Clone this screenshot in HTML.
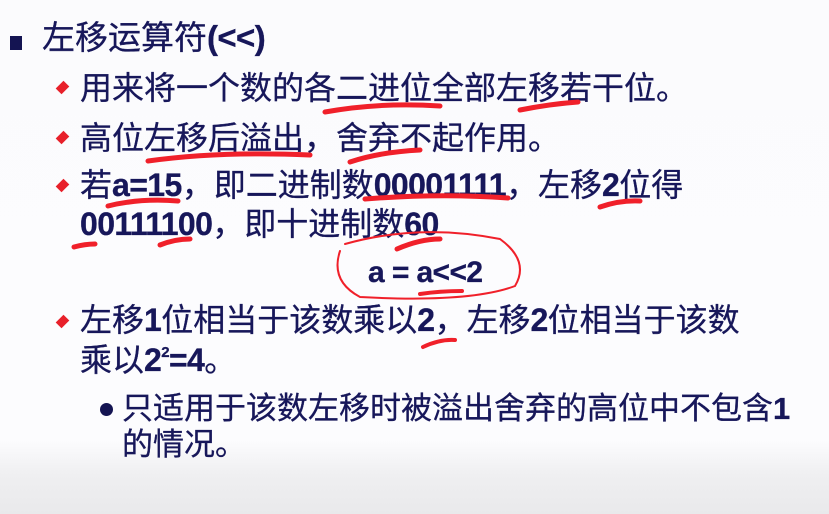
<!DOCTYPE html>
<html><head><meta charset="utf-8"><style>
html,body{margin:0;padding:0}
body{width:829px;height:514px;overflow:hidden;position:relative;background:linear-gradient(to bottom,#fbfbfd 0,#fcfcfe 440px,#efeff1 475px,#e9e9eb 514px);font-family:"Liberation Sans","Noto Sans CJK SC",sans-serif;color:#17175a}
.t{position:absolute;white-space:nowrap;line-height:1;-webkit-text-stroke:0.3px #17175a}
b{font-weight:bold;letter-spacing:-0.6px}
.d{position:absolute;width:11px;height:11px;background:#e8202a;transform:rotate(45deg) scaleX(0.75)}
</style></head><body>
<div style="position:absolute;left:10px;top:36px;width:12px;height:14px;background:#141452"></div>
<div class="t" style="left:42px;top:21px;font-size:33px">左移运算符<b>(&lt;&lt;)</b></div>

<div class="d" style="left:57px;top:82px"></div>
<div class="t" style="left:80px;top:72px;font-size:32px">用来将一个数的各二进位全部左移若干位。</div>
<div class="d" style="left:57px;top:132px"></div>
<div class="t" style="left:80px;top:122px;font-size:32px">高位左移后溢出，舍弃不起作用。</div>
<div class="d" style="left:57px;top:180px"></div>
<div class="t" style="left:80px;top:169px;font-size:32px">若<b>a=15</b>，即二进制数<b>00001111</b>，左移<b>2</b>位得</div>
<div class="t" style="left:80px;top:208px;font-size:32px"><b>00111100</b>，即十进制数<b>60</b></div>
<div class="t" style="left:368px;top:258px;font-size:30px"><b>a = a&lt;&lt;2</b></div>
<div class="d" style="left:57px;top:316px"></div>
<div class="t" style="left:80px;top:304px;font-size:32px">左移<b>1</b>位相当于该数乘以<b>2</b>，左移<b>2</b>位相当于该数</div>
<div class="t" style="left:80px;top:344px;font-size:32px">乘以<b>2<sup style="font-size:15px;vertical-align:14px">2</sup>=4</b>。</div>
<div style="position:absolute;left:100px;top:403px;width:13px;height:13px;border-radius:50%;background:#141452"></div>
<div class="t" style="left:122px;top:393px;font-size:31px">只适用于该数左移时被溢出舍弃的高位中不包含<b>1</b></div>
<div class="t" style="left:122px;top:429px;font-size:31px">的情况。</div>

<svg width="829" height="514" style="position:absolute;left:0;top:0" fill="none" stroke="#f0202a" stroke-linecap="round">
<path d="M325 112 Q380 102 440 106" stroke-width="5"/>
<path d="M520 110 Q550 104 578 102" stroke-width="5"/>
<path d="M148 161 Q220 151 310 155" stroke-width="5"/>
<path d="M350 162 Q380 152 420 150" stroke-width="5"/>
<path d="M108 206 Q140 198 178 201" stroke-width="5"/>
<path d="M365 199 Q440 193 508 198" stroke-width="5"/>
<path d="M600 207 Q620 200 640 201" stroke-width="5"/>
<path d="M74 247 Q85 244 95 244" stroke-width="5"/>
<path d="M160 245 Q175 239 190 239" stroke-width="5"/>
<path d="M397 249 Q420 239 440 239" stroke-width="5"/>
<path d="M345 244 Q420 223 500 239 Q530 261 515 286 Q470 303 360 297 Q330 281 340 251" stroke-width="2"/>
<path d="M420 294 Q440 291 462 291" stroke-width="4"/>
<path d="M423 347 Q440 339 455 340" stroke-width="4"/>
</svg>
</body></html>
